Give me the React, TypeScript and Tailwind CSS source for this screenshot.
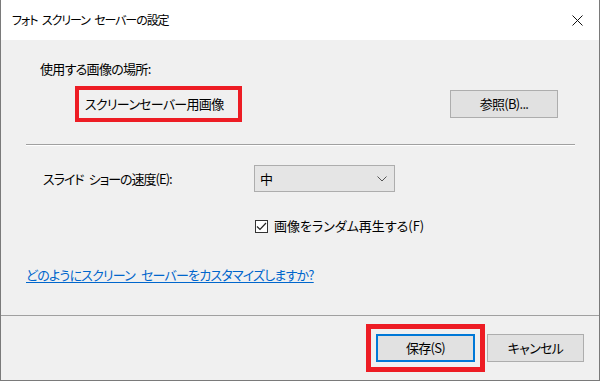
import React from 'react';

const font = "font-['Yu_Gothic_UI','Noto_Sans_CJK_JP',sans-serif] [font-feature-settings:'palt'] tracking-[-0.7px] [word-spacing:4px]";

const Btn: React.FC<{ children: React.ReactNode; focused?: boolean; className?: string }> = ({ children, focused, className }) => (
  <div
    className={
      'flex items-center justify-center bg-[#e1e1e1] text-[13px] text-black ' +
      (focused ? 'border-2 border-[#0078d7] ' : 'border border-[#adadad] ') +
      (className ?? '')
    }
  >
    {children}
  </div>
);

export default function App() {
  return (
    <div className={`w-[600px] h-[381px] flex flex-col bg-[#f0f0f0] border-x border-b border-[#7a7a7a] overflow-hidden ${font}`}>
      {/* title bar */}
      <div className="h-[40px] flex items-center bg-white pl-[11px] pr-[16px]">
        <span className="flex-1 text-[12px] tracking-[-1.1px] [word-spacing:3px] text-black">フォト スクリーン セーバーの設定</span>
        <svg width="11" height="11" viewBox="0 0 11 11">
          <path d="M0.5 0.5 L10.5 10.5 M10.5 0.5 L0.5 10.5" stroke="#111" strokeWidth="1" />
        </svg>
      </div>

      {/* body */}
      <div className="flex-1 flex flex-col">
        <div className="mt-[19px] ml-[39px] h-[20px] flex items-center text-[13px] text-black">使用する画像の場所:</div>

        <div className="mt-[7px] flex items-center pl-[74px] pr-[41px]">
          <div className="h-[36px] w-[167px] border-4 border-[#ed1c24] flex items-center pl-[6px] text-[13px] text-black">
            スクリーンセーバー用画像
          </div>
          <div className="flex-1" />
          <Btn className="w-[108px] h-[28px]">参照(B)...</Btn>
        </div>

        <div className="mt-[22px] ml-[25px] w-[549px]">
          <div className="h-px bg-[#a0a0a0]" />
          <div className="h-px bg-white" />
        </div>

        <div className="mt-[19px] flex items-center">
          <div className="w-[253px] pl-[42px] text-[13px] tracking-[-1px] [word-spacing:3px] text-black">スライド ショーの速度(E):</div>
          <div className="w-[141px] h-[27px] bg-[#e5e5e5] border border-[#adadad] flex items-center pl-[5px] pr-[7px]">
            <span className="flex-1 text-[13px] text-black">中</span>
            <svg width="10" height="6" viewBox="0 0 10 6">
              <path d="M0.5 0.5 L5 5 L9.5 0.5" fill="none" stroke="#555" strokeWidth="1" />
            </svg>
          </div>
        </div>

        <div className="mt-[24px] h-[20px] flex items-center pl-[254px]">
          <div className="w-[13px] h-[13px] bg-white border border-[#333] flex items-center justify-center">
            <svg width="11" height="9" viewBox="0 0 11 9">
              <path d="M1 4.5 L4 7.5 L10 1" fill="none" stroke="#222" strokeWidth="1.2" />
            </svg>
          </div>
          <span className="ml-[6px] text-[13px] tracking-[0px] text-black">画像をランダム再生する(F)</span>
        </div>

        <div className="mt-[29px] h-[20px] flex items-center pl-[25px]">
          <span className="text-[13px] tracking-[-0.8px] text-[#0066cc] underline underline-offset-2">どのようにスクリーン セーバーをカスタマイズしますか?</span>
        </div>
      </div>

      {/* footer */}
      <div className="h-px bg-[#a0a0a0]" />
      <div className="h-[64px] flex items-center justify-end pr-[15px] gap-[10px]">
        <div className="border-[5px] border-[#ed1c24] bg-[#f0f0f0] p-[5px]">
          <Btn focused className="w-[99px] h-[28px]">保存(S)</Btn>
        </div>
        <Btn className="w-[97px] h-[28px] -ml-[8px]">キャンセル</Btn>
      </div>
    </div>
  );
}
